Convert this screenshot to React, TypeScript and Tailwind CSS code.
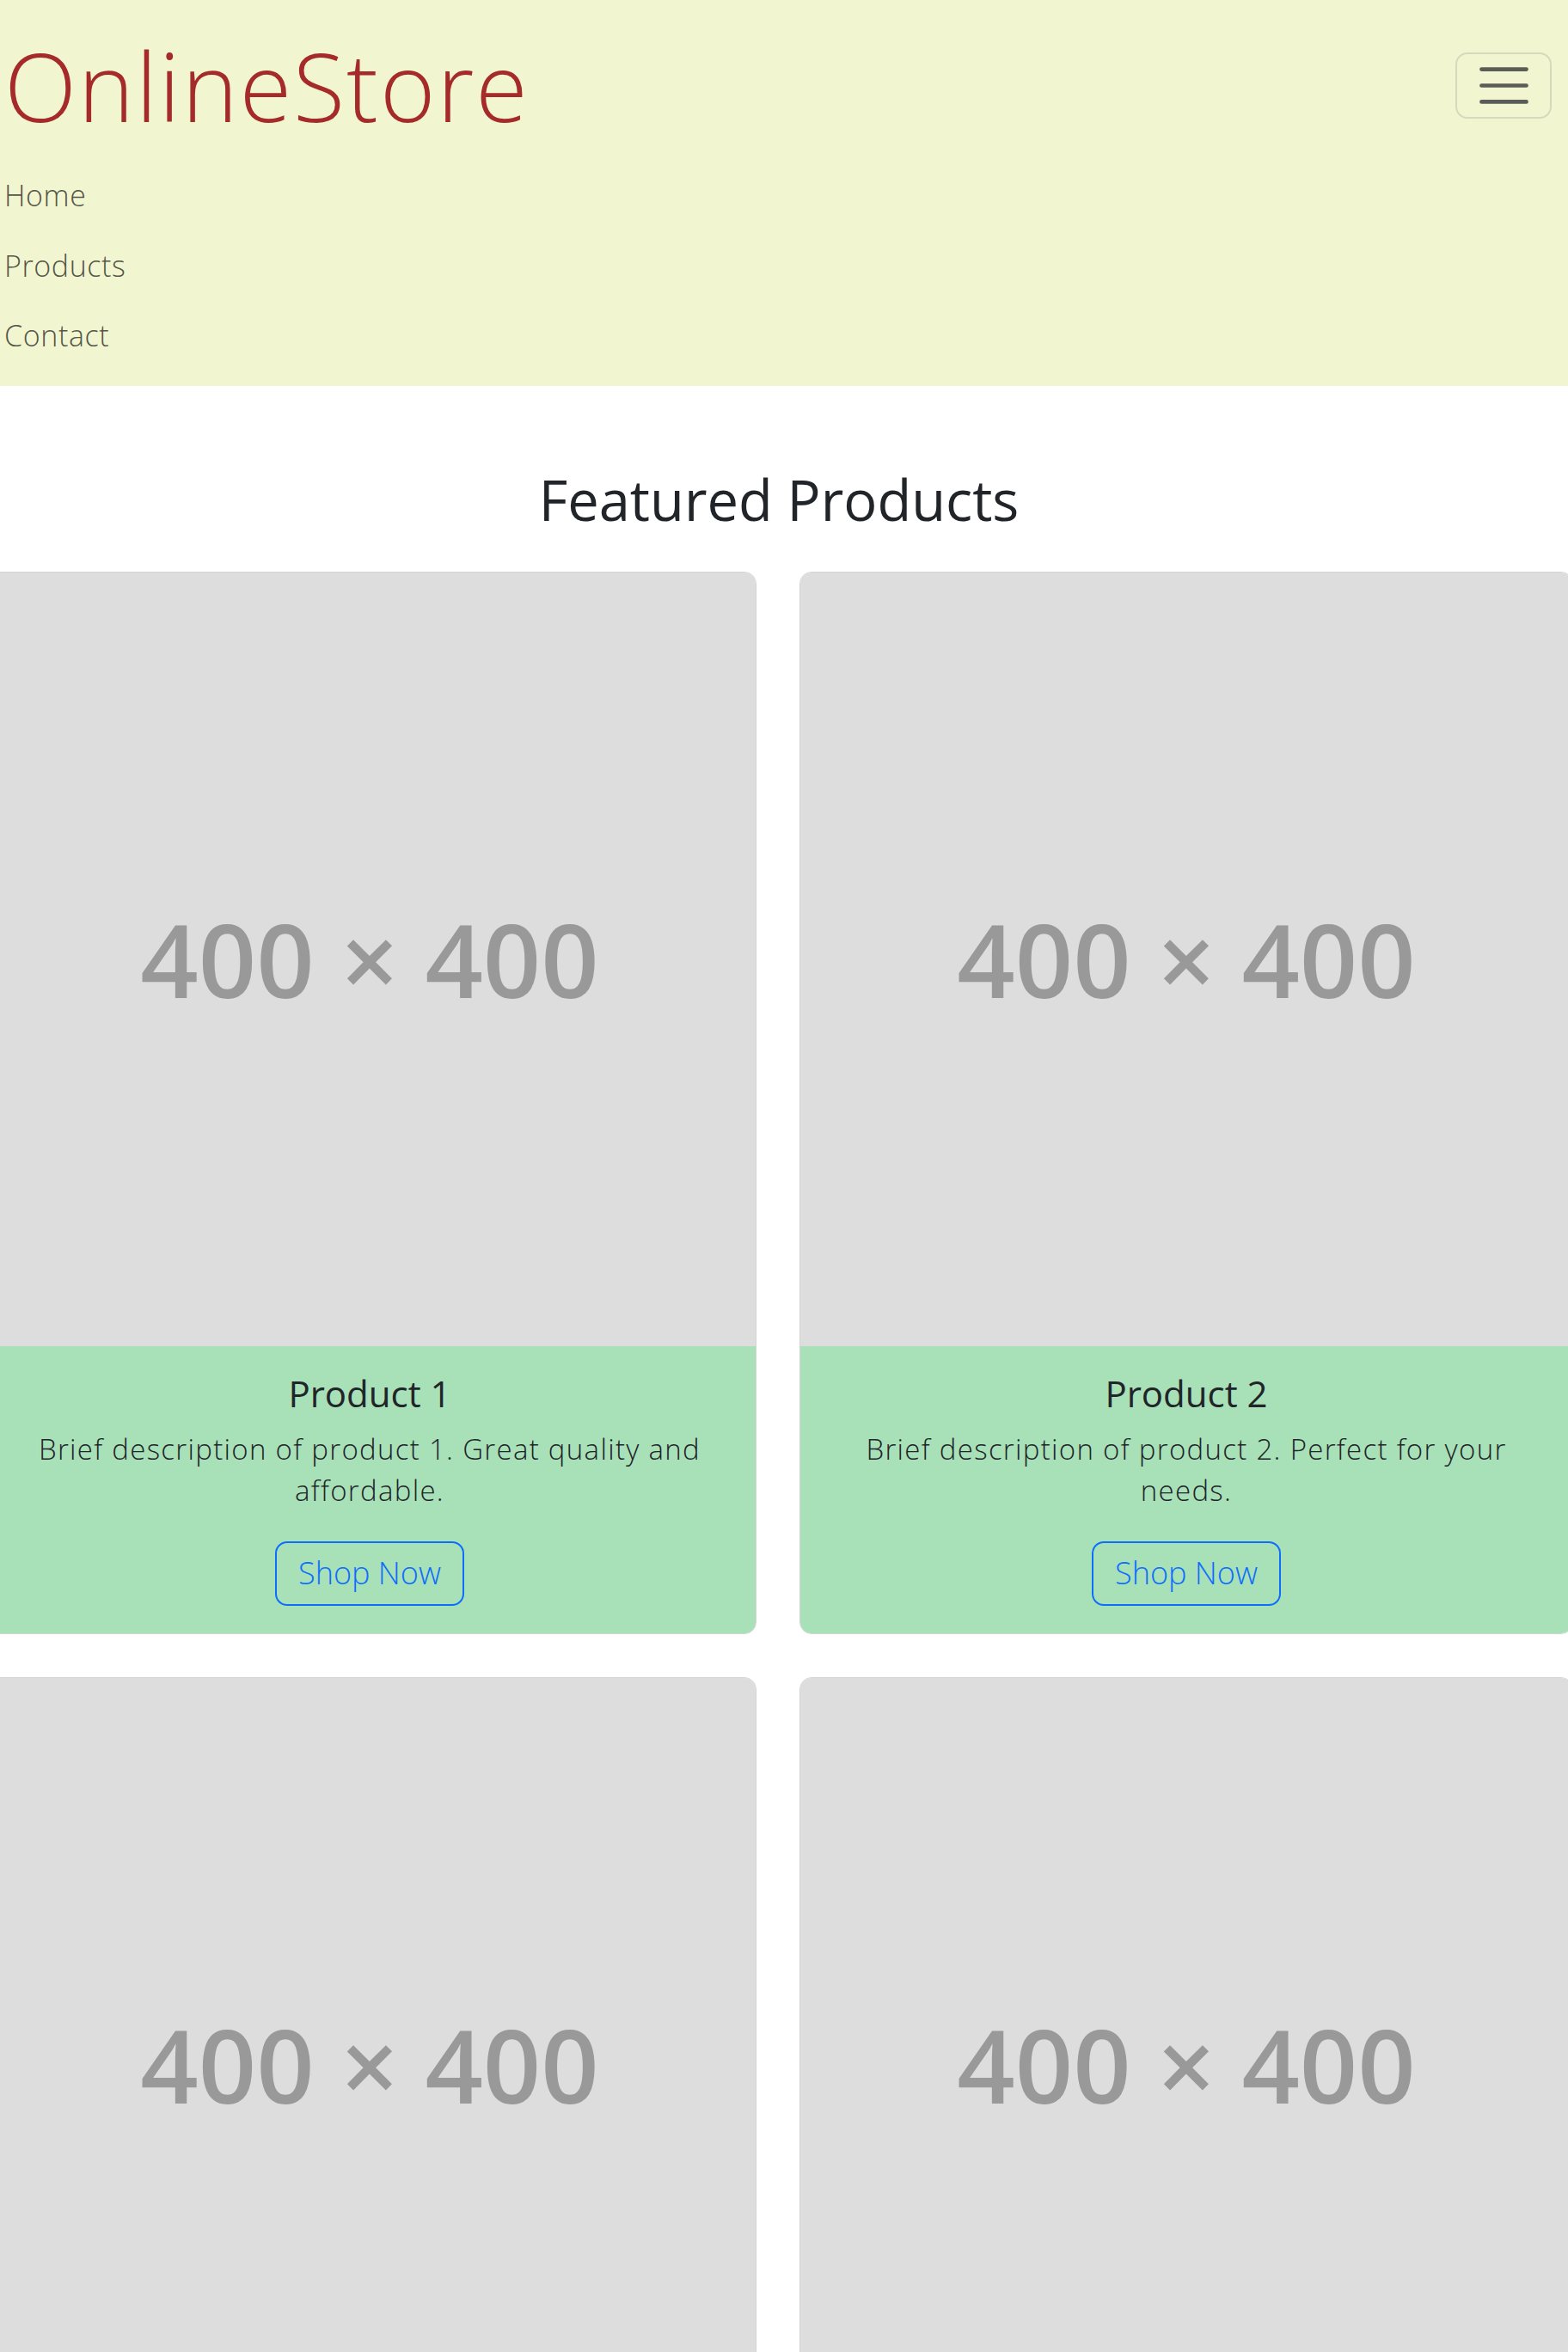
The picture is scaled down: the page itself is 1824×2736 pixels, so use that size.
const products = [
  { id: 1, name: "Product 1", text: "Brief description of product 1. Great quality and affordable." },
  { id: 2, name: "Product 2", text: "Brief description of product 2. Perfect for your needs." },
  { id: 3, name: "Product 3", text: "Brief description of product 3. Built to last." },
  { id: 4, name: "Product 4", text: "Brief description of product 4. A customer favourite." },
]

const font = "font-['Open_Sans','Noto_Sans',sans-serif]"

function TogglerIcon() {
  return (
    <svg width="71" height="71" viewBox="0 0 30 30" fill="none">
      <path
        d="M4 7h22M4 15h22M4 23h22"
        stroke="#5a5d57"
        strokeWidth="2"
        strokeLinecap="round"
      />
    </svg>
  )
}

function Navbar() {
  return (
    <header className="bg-[#f2f6d0] pl-[5px] pr-[19px] pt-[32px] pb-[17px]">
      <div className="flex items-center justify-between">
        <a href="#" className="text-[110px] leading-[135px] font-light text-[#a52a2a] tracking-[2px]">
          OnlineStore
        </a>
        <button
          aria-label="Toggle navigation"
          className="flex h-[77px] w-[112px] items-center justify-center rounded-[14px] border-2 border-[#d6d9bc]"
        >
          <TogglerIcon />
        </button>
      </div>

      {/* Collapsed nav links */}
      <nav className="mt-[20px] flex flex-col">
        {["Home", "Products", "Contact"].map((item) => (
          <a key={item} href="#" className="text-[34px] leading-[81.5px] font-light tracking-[0.6px] text-[#555649]">
            {item}
          </a>
        ))}
      </nav>
    </header>
  )
}

function ProductCard({ product }: { product: (typeof products)[number] }) {
  return (
    <div className="flex w-[900px] shrink-0 flex-col overflow-hidden rounded-[14px] border border-[#d4d4d4] bg-white">
      {/* Placeholder image */}
      <div className="flex h-[900px] items-center justify-center bg-[#dddddd]">
        <span className="font-['Open_Sans',sans-serif] text-[118px] font-semibold leading-none text-[#999999]">
          400 × 400
        </span>
      </div>

      <div className="flex-1 bg-[#a8e0b8] px-[40px] pt-[30px] pb-[32px] text-center">
        <h5 className="text-[42px] leading-[50px] font-normal text-[#212529]">{product.name}</h5>
        <p className="mt-[16px] text-[33px] leading-[48px] font-light tracking-[1.3px] text-[#212529]">
          {product.text}
        </p>
        <button className="mt-[35px] h-[75px] rounded-[14px] border-2 border-[#0d6efd] px-[25px] text-[36px] font-light text-[#0d6efd]">
          Shop Now
        </button>
      </div>
    </div>
  )
}

export default function App() {
  return (
    <div className={`${font} min-h-screen overflow-x-hidden bg-white`}>
      <Navbar />

      <main className="pt-[92px]">
        <h2 className="pr-[12px] text-center text-[65px] leading-[80px] font-normal text-[#212529]">
          Featured Products
        </h2>

        <div className="mt-[44px] ml-[-20px] flex w-[1850px] flex-wrap gap-[50px]">
          {products.map((p) => (
            <ProductCard key={p.id} product={p} />
          ))}
        </div>
      </main>
    </div>
  )
}
